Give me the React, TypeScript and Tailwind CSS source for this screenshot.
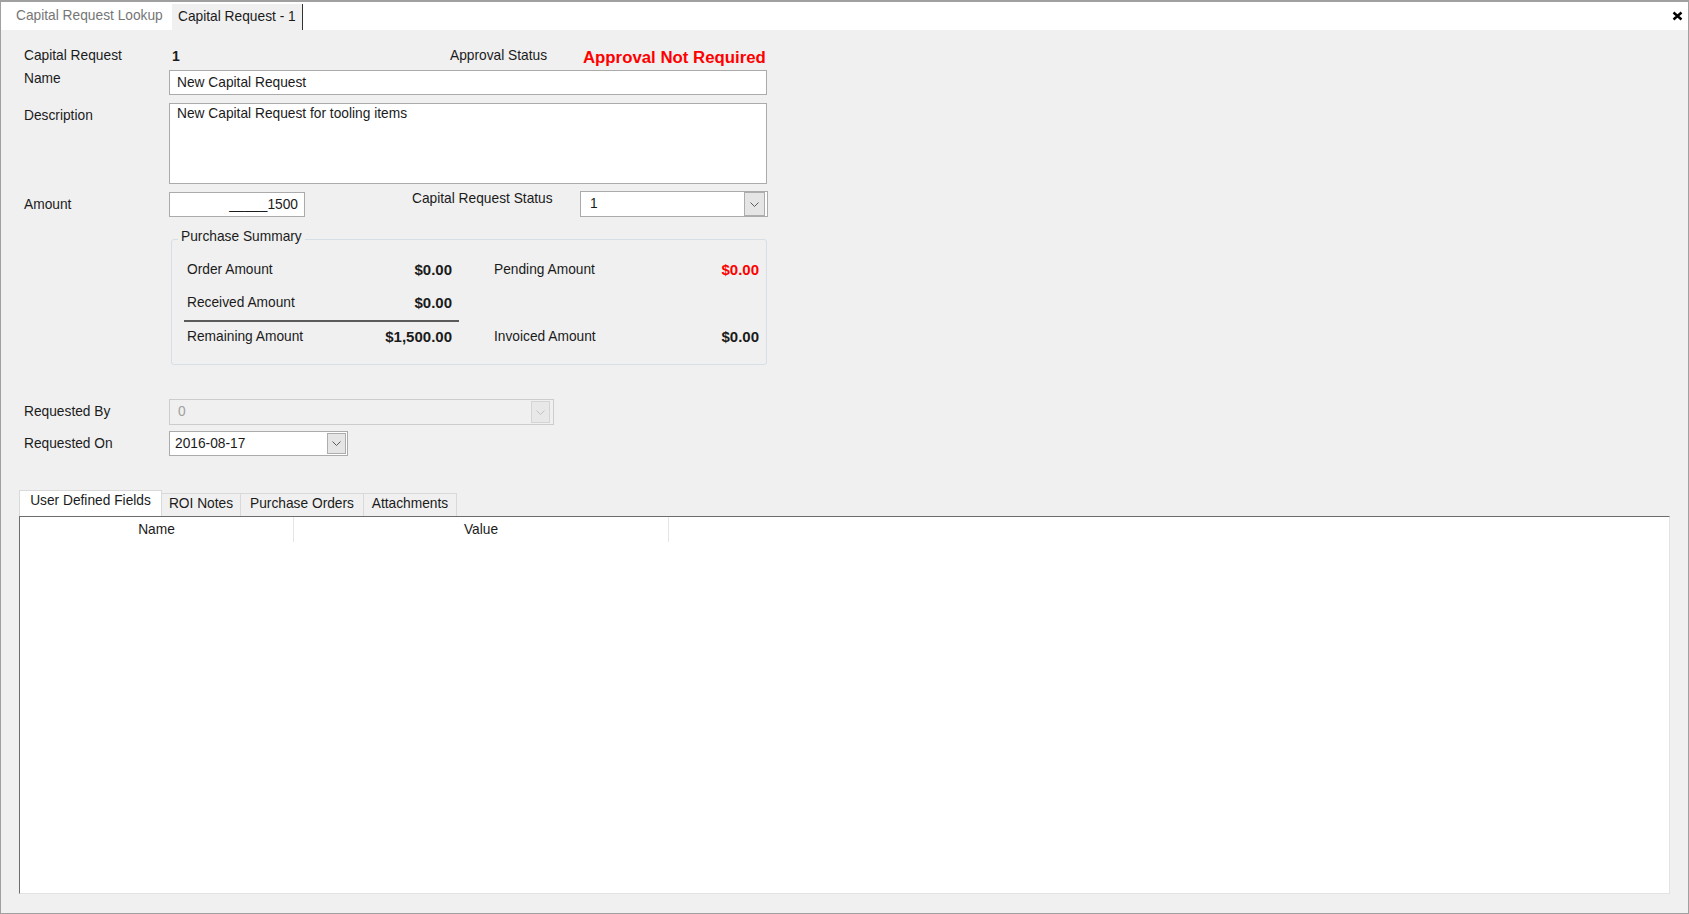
import React from "react";

const Chevron = ({ disabled }: { disabled?: boolean }) => (
  <svg width="9" height="5" viewBox="0 0 9 5" fill="none">
    <path
      d="M0.5 0.5L4.5 4.5L8.5 0.5"
      stroke={disabled ? "#c2c2c2" : "#5a5a5a"}
      strokeWidth="1"
    />
  </svg>
);

const SummaryRow = ({
  leftLabel,
  leftValue,
  rightLabel,
  rightValue,
  rightRed,
}: any) => (
  <div className="flex h-[20px] items-center">
    <div className="flex w-[268px] items-center justify-between pl-[3px]">
      <span>{leftLabel}</span>
      <span className="text-[15px] font-bold">{leftValue}</span>
    </div>
    {rightLabel && (
      <div className="ml-[42px] flex w-[265px] items-center justify-between">
        <span>{rightLabel}</span>
        <span
          className={
            rightRed
              ? "text-[15px] font-bold text-[#ff0000]"
              : "text-[15px] font-bold"
          }
        >
          {rightValue}
        </span>
      </div>
    )}
  </div>
);

export default function App() {
  const tabs = [
    { label: "ROI Notes", w: "w-[79px]" },
    { label: "Purchase Orders", w: "w-[123px]" },
    { label: "Attachments", w: "w-[93px]" },
  ];

  return (
    <div className="flex h-[914px] w-[1689px] flex-col overflow-hidden border border-t-2 border-[#a0a0a0] bg-[#f0f0f0] font-['Liberation_Sans',Arial,sans-serif] text-[13.75px] leading-[16px] text-[#1b1b1b]">
      {/* document tabs */}
      <div className="flex h-[28px] items-end bg-white">
        <div className="flex h-full w-[171px] items-center pl-[15px] text-[#767676]">
          Capital Request Lookup
        </div>
        <div className="flex h-[26px] w-[131px] items-center border-r border-[#333333] bg-[#f0f0f0] pl-[6px]">
          Capital Request - 1
        </div>
        <div className="ml-auto flex h-full items-center pr-[5px]">
          <svg width="11" height="10" viewBox="0 0 11 10">
            <path
              d="M1.5 1.5L9.5 8.5M9.5 1.5L1.5 8.5"
              stroke="#000"
              strokeWidth="2.4"
            />
          </svg>
        </div>
      </div>

      <div className="flex flex-1 flex-col">
        {/* form */}
        <div className="flex flex-col pl-[23px]">
          <div className="mt-[16px] flex h-[20px] items-center">
            <span className="w-[148px]">Capital Request</span>
            <span className="w-[278px] text-[14px] font-bold">1</span>
            <span className="w-[133px]">Approval Status</span>
            <span className="mt-[4px] text-[16.8px] font-bold leading-[20px] text-[#ff0000]">
              Approval Not Required
            </span>
          </div>

          <div className="mt-[4px] flex items-start">
            <span className="w-[145px] pt-[1px]">Name</span>
            <div className="flex h-[25px] w-[598px] items-center border border-[#ababab] bg-white pl-[7px]">
              New Capital Request
            </div>
          </div>

          <div className="mt-[8px] flex items-start">
            <span className="w-[145px] pt-[5px]">Description</span>
            <div className="h-[81px] w-[598px] border border-[#ababab] bg-white pl-[7px] pt-[2px]">
              New Capital Request for tooling items
            </div>
          </div>

          <div className="mt-[7px] flex items-start">
            <span className="w-[145px] pt-[6px]">Amount</span>
            <div className="mt-[1px] flex h-[25px] w-[136px] items-center justify-end border border-[#ababab] bg-white pr-[6px]">
              _____1500
            </div>
            <span className="ml-[107px] w-[168px]">Capital Request Status</span>
            <div className="flex h-[26px] w-[188px] items-center border border-[#ababab] bg-white pl-[9px]">
              <span>1</span>
              <span className="ml-auto mr-[2px] flex h-[24px] w-[21px] items-center justify-center border border-[#adadad] bg-[#e5e5e5]">
                <Chevron />
              </span>
            </div>
          </div>

          <fieldset className="ml-[147px] mt-[12px] h-[136px] w-[596px] rounded-[3px] border border-[#d5dfe5]">
            <legend className="ml-[6px] px-[3px] pb-[4px] leading-[16px]">
              Purchase Summary
            </legend>
            <div className="flex flex-col pl-[12px]">
              <div className="mt-[11px]">
                <SummaryRow
                  leftLabel="Order Amount"
                  leftValue="$0.00"
                  rightLabel="Pending Amount"
                  rightValue="$0.00"
                  rightRed
                />
              </div>
              <div className="mt-[13px]">
                <SummaryRow leftLabel="Received Amount" leftValue="$0.00" />
              </div>
              <div className="mt-[7px] h-[2px] w-[275px] bg-[#5a5a5a]" />
              <div className="mt-[5px]">
                <SummaryRow
                  leftLabel="Remaining Amount"
                  leftValue="$1,500.00"
                  rightLabel="Invoiced Amount"
                  rightValue="$0.00"
                />
              </div>
            </div>
          </fieldset>

          <div className="mt-[34px] flex h-[26px] items-center">
            <span className="w-[145px]">Requested By</span>
            <div className="flex h-[26px] w-[385px] items-center border border-[#cccccc] bg-[#f0f0f0] pl-[8px] text-[#a0a0a0]">
              <span>0</span>
              <span className="ml-auto mr-[3px] flex h-[22px] w-[19px] items-center justify-center border border-[#d4d4d4] bg-[#e8e8e8]">
                <Chevron disabled />
              </span>
            </div>
          </div>

          <div className="mt-[6px] flex h-[25px] items-center">
            <span className="w-[145px]">Requested On</span>
            <div className="flex h-[25px] w-[179px] items-center border border-[#ababab] bg-white pl-[5px]">
              <span>2016-08-17</span>
              <span className="ml-auto mr-[1px] flex h-[21px] w-[19px] items-center justify-center border border-[#adadad] bg-[#e5e5e5]">
                <Chevron />
              </span>
            </div>
          </div>
        </div>

        {/* detail tabs */}
        <div className="mt-[34px] flex flex-1 flex-col px-[18px] pb-[19px]">
          <div className="flex h-[26px] items-end">
            <div className="flex h-[26px] w-[143px] justify-center border border-b-0 border-[#d9d9d9] bg-white pt-[2px]">
              User Defined Fields
            </div>
            {tabs.map((t) => (
              <div
                key={t.label}
                className={`flex h-[23px] ${t.w} justify-center border-r border-t border-[#d9d9d9] bg-[#f0f0f0] pt-[2px]`}
              >
                {t.label}
              </div>
            ))}
          </div>
          <div className="flex flex-1 flex-col border border-b-[#e3e3e3] border-l-[#6d6d6d] border-r-[#e3e3e3] border-t-[#6d6d6d] bg-white">
            <div className="flex h-[25px]">
              <div className="flex w-[274px] items-center justify-center border-r border-[#e5e5e5]">
                Name
              </div>
              <div className="flex w-[375px] items-center justify-center border-r border-[#e5e5e5]">
                Value
              </div>
            </div>
          </div>
        </div>
      </div>
    </div>
  );
}
